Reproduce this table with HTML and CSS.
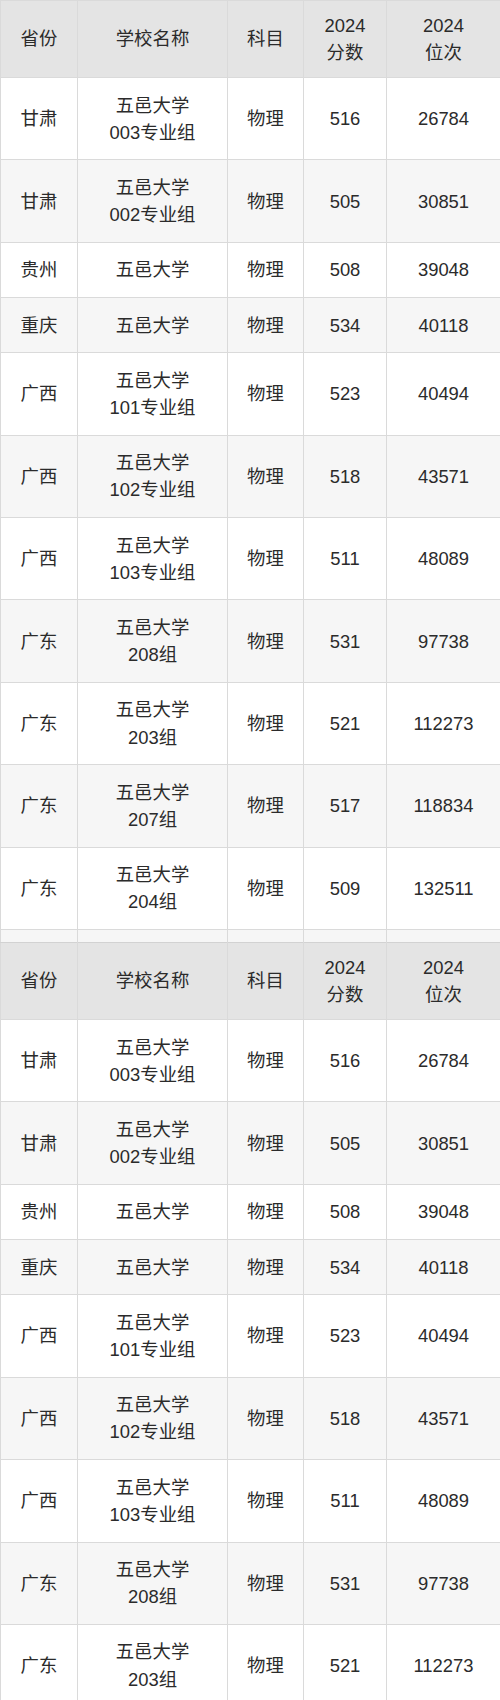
FILE: index.html
```html
<!DOCTYPE html>
<html lang="zh-CN">
<head>
<meta charset="utf-8">
<title>五邑大学 2024 分数位次</title>
<link rel="stylesheet" href="styles.css">
</head>
<body>
<div class="page">
<table class="score">
  <colgroup><col class="c1"><col class="c2"><col class="c3"><col class="c4"><col class="c5"></colgroup>
  <thead>
    <tr><th>省份</th><th>学校名称</th><th>科目</th><th>2024<br>分数</th><th>2024<br>位次</th></tr>
  </thead>
  <tbody>
    <tr><td>甘肃</td><td>五邑大学<br>003专业组</td><td>物理</td><td>516</td><td>26784</td></tr>
    <tr><td>甘肃</td><td>五邑大学<br>002专业组</td><td>物理</td><td>505</td><td>30851</td></tr>
    <tr><td>贵州</td><td>五邑大学</td><td>物理</td><td>508</td><td>39048</td></tr>
    <tr><td>重庆</td><td>五邑大学</td><td>物理</td><td>534</td><td>40118</td></tr>
    <tr><td>广西</td><td>五邑大学<br>101专业组</td><td>物理</td><td>523</td><td>40494</td></tr>
    <tr><td>广西</td><td>五邑大学<br>102专业组</td><td>物理</td><td>518</td><td>43571</td></tr>
    <tr><td>广西</td><td>五邑大学<br>103专业组</td><td>物理</td><td>511</td><td>48089</td></tr>
    <tr><td>广东</td><td>五邑大学<br>208组</td><td>物理</td><td>531</td><td>97738</td></tr>
    <tr><td>广东</td><td>五邑大学<br>203组</td><td>物理</td><td>521</td><td>112273</td></tr>
    <tr><td>广东</td><td>五邑大学<br>207组</td><td>物理</td><td>517</td><td>118834</td></tr>
    <tr><td>广东</td><td>五邑大学<br>204组</td><td>物理</td><td>509</td><td>132511</td></tr>
    <tr class="cut"><td></td><td></td><td></td><td></td><td></td></tr>
  </tbody>
</table>
<table class="score second">
  <colgroup><col class="c1"><col class="c2"><col class="c3"><col class="c4"><col class="c5"></colgroup>
  <thead>
    <tr><th>省份</th><th>学校名称</th><th>科目</th><th>2024<br>分数</th><th>2024<br>位次</th></tr>
  </thead>
  <tbody>
    <tr><td>甘肃</td><td>五邑大学<br>003专业组</td><td>物理</td><td>516</td><td>26784</td></tr>
    <tr><td>甘肃</td><td>五邑大学<br>002专业组</td><td>物理</td><td>505</td><td>30851</td></tr>
    <tr><td>贵州</td><td>五邑大学</td><td>物理</td><td>508</td><td>39048</td></tr>
    <tr><td>重庆</td><td>五邑大学</td><td>物理</td><td>534</td><td>40118</td></tr>
    <tr><td>广西</td><td>五邑大学<br>101专业组</td><td>物理</td><td>523</td><td>40494</td></tr>
    <tr><td>广西</td><td>五邑大学<br>102专业组</td><td>物理</td><td>518</td><td>43571</td></tr>
    <tr><td>广西</td><td>五邑大学<br>103专业组</td><td>物理</td><td>511</td><td>48089</td></tr>
    <tr><td>广东</td><td>五邑大学<br>208组</td><td>物理</td><td>531</td><td>97738</td></tr>
    <tr><td>广东</td><td>五邑大学<br>203组</td><td>物理</td><td>521</td><td>112273</td></tr>
  </tbody>
</table>
</div>
</body>
</html>
```

FILE: styles.css
```css
html, body {
  margin: 0;
  padding: 0;
  background: #ffffff;
}

.page {
  width: 500px;
  overflow: hidden;
}

.score {
  width: 500px;
  border-collapse: collapse;
  table-layout: fixed;
  font-family: "Liberation Sans", "Noto Sans CJK SC", sans-serif;
  font-size: 18.4px;
  line-height: 27.2px;
  color: #2b2b2b;
}

.c1 { width: 77px; }
.c2 { width: 150px; }
.c3 { width: 76px; }
.c4 { width: 83px; }
.c5 { width: 114px; }

.score th,
.score td {
  border: 1px solid #dadada;
  text-align: center;
  vertical-align: middle;
  font-weight: normal;
}

.score th {
  background: #e4e4e4;
  padding: 10.8px 2px;
}

.score td {
  padding: 13.5px 2px;
}

.score tbody tr:nth-child(even) td {
  background: #f6f6f6;
}

.score tbody tr:nth-child(odd) td {
  background: #ffffff;
}

.score tbody tr.cut td {
  padding: 0;
  height: 12px;
  background: #f6f6f6;
  border-bottom: none;
}

.second th {
  border-top-color: #d2d2d2;
}
```
